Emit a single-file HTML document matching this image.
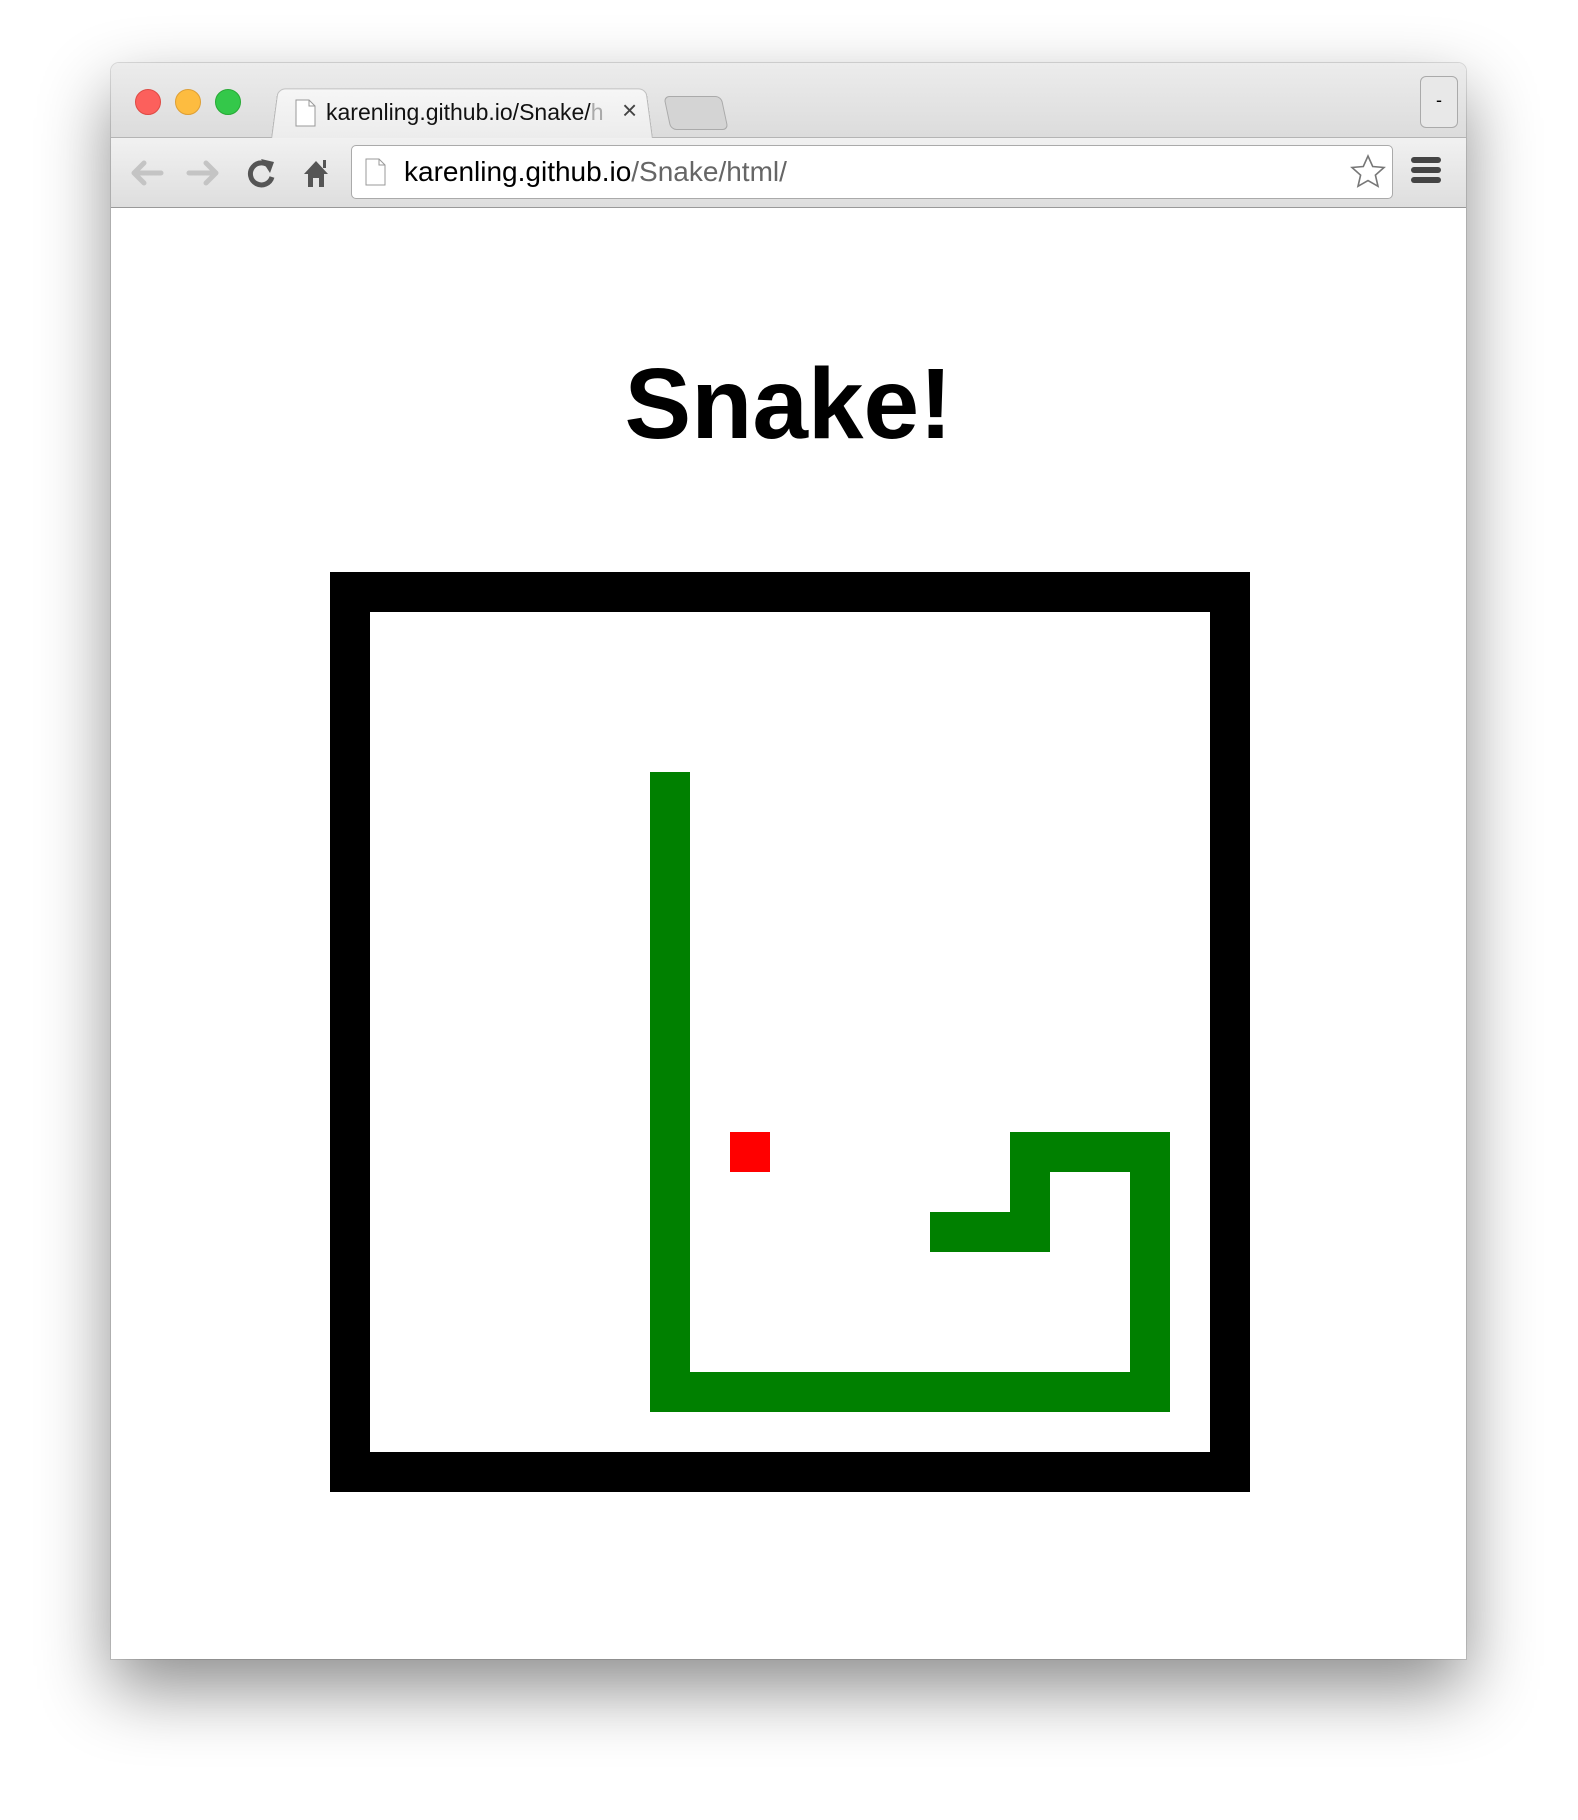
<!DOCTYPE html>
<html><head><meta charset="utf-8"><style>
html,body{margin:0;padding:0;background:#fff;width:1578px;height:1820px;overflow:hidden;font-family:"Liberation Sans",sans-serif}
.win{position:absolute;left:111px;top:63px;width:1355px;height:1596px;background:#fff;border-radius:8px 8px 0 0;box-shadow:0 30px 70px rgba(0,0,0,.45),0 0 0 1px rgba(0,0,0,.12);overflow:hidden}
.tabbar{position:absolute;left:0;top:0;width:100%;height:74px;background:linear-gradient(#ececec,#dcdcdc);border-bottom:1px solid #b4b4b4}
.dot{position:absolute;top:26px;width:24px;height:24px;border-radius:50%}
.tab{position:absolute;left:160px;top:23px;width:380px;height:52px;background:linear-gradient(#f6f6f6,#ececec);border:1px solid #b8b8b8;border-bottom:none;border-radius:8px 8px 0 0;transform:perspective(200px) rotateX(8deg);transform-origin:bottom}
.tabtxt{position:absolute;left:215px;top:36px;font-size:23px;color:#111;white-space:nowrap}
.newtab{position:absolute;left:556px;top:33px;width:56px;height:32px;background:#d4d4d4;border:1px solid #aaa;border-radius:6px;transform:skewX(12deg)}
.min{position:absolute;right:8px;top:13px;width:36px;height:50px;border:1px solid #aaa;border-radius:6px;background:#e8e8e8;text-align:center;line-height:46px;font-size:18px}
.toolbar{position:absolute;left:0;top:75px;width:100%;height:69px;background:linear-gradient(#f1f1f1,#dedede);border-bottom:1px solid #999}
.omni{position:absolute;left:240px;top:7px;width:1040px;height:52px;background:#fff;border:1px solid #aaa;border-radius:5px}
.url{position:absolute;left:52px;top:10px;font-size:28px;color:#000}
.url span{color:#666}
.title{position:absolute;left:0;width:100%;top:284px;text-align:center;font-size:100px;font-weight:bold;color:#000}
.board{position:absolute;left:219px;top:509px;width:840px;height:840px;border:40px solid #000;background:#fff}
.c{position:absolute;background:#008000}
</style></head><body>
<div class="win">
 <div class="tabbar">
  <div class="dot" style="left:24px;background:#fc605c;border:1px solid #de4a44"></div>
  <div class="dot" style="left:64px;background:#fdbc40;border:1px solid #de9f34"></div>
  <div class="dot" style="left:104px;background:#34c84a;border:1px solid #27aa35"></div>
  <div class="tab"></div>
  <svg style="position:absolute;left:184px;top:36px" width="22" height="28"><path d="M1 1h13l6 6v20H1z" fill="#fff" stroke="#999"/><path d="M14 1v6h6" fill="none" stroke="#999"/></svg>
  <div class="tabtxt">karenling.github.io/Snake/<span style="color:#aaa">h</span></div>
  <div style="position:absolute;left:511px;top:32px;font-size:26px;color:#444">×</div>
  <div class="newtab"></div>
  <div class="min">-</div>
 </div>
 <div class="toolbar">
  <svg style="position:absolute;left:16px;top:20px" width="210" height="30">
   <path d="M34 15H8M17 5L7 15l10 10" fill="none" stroke="#c4c4c4" stroke-width="5" stroke-linecap="round" stroke-linejoin="round"/>
   <path d="M62 15h26M79 5l10 10-10 10" fill="none" stroke="#c4c4c4" stroke-width="5" stroke-linecap="round" stroke-linejoin="round"/>
   <path d="M143 9a11 11 0 1 0 2 10" fill="none" stroke="#555" stroke-width="5"/><path d="M134 1l13 3-4 11z" fill="#555"/>
   <path d="M177 16l12-13 12 13h-4v13h-5v-9h-6v9h-5V16z" fill="#555"/><rect x="196" y="2" width="3" height="8" fill="#555"/>
  </svg>
  <div class="omni">
   <svg style="position:absolute;left:13px;top:12px" width="22" height="28"><path d="M1 1h13l6 6v20H1z" fill="#fff" stroke="#999"/><path d="M14 1v6h6" fill="none" stroke="#999"/></svg>
   <div class="url">karenling.github.io<span>/Snake/html/</span></div>
   <svg style="position:absolute;right:6px;top:8px" width="36" height="36"><path d="M18 2l4.7 10.5 11.3 1-8.6 7.6 2.6 11.2L18 26.5 8 32.3l2.6-11.2L2 13.5l11.3-1z" fill="#fff" stroke="#777" stroke-width="1.6"/></svg>
  </div>
  <svg style="position:absolute;left:1299px;top:18px" width="32" height="28"><rect x="1" y="1" width="30" height="6" rx="3" fill="#444"/><rect x="1" y="11" width="30" height="6" rx="3" fill="#444"/><rect x="1" y="21" width="30" height="6" rx="3" fill="#444"/></svg>
 </div>
 <div class="title">Snake!</div>
 <div class="board">
  <div class="c" style="left:280px;top:160px;width:40px;height:640px"></div>
  <div class="c" style="left:280px;top:760px;width:520px;height:40px"></div>
  <div class="c" style="left:760px;top:520px;width:40px;height:280px"></div>
  <div class="c" style="left:640px;top:520px;width:160px;height:40px"></div>
  <div class="c" style="left:640px;top:520px;width:40px;height:120px"></div>
  <div class="c" style="left:560px;top:600px;width:120px;height:40px"></div>
  <div style="position:absolute;left:360px;top:520px;width:40px;height:40px;background:#f00"></div>
 </div>
</div>
</body></html>
